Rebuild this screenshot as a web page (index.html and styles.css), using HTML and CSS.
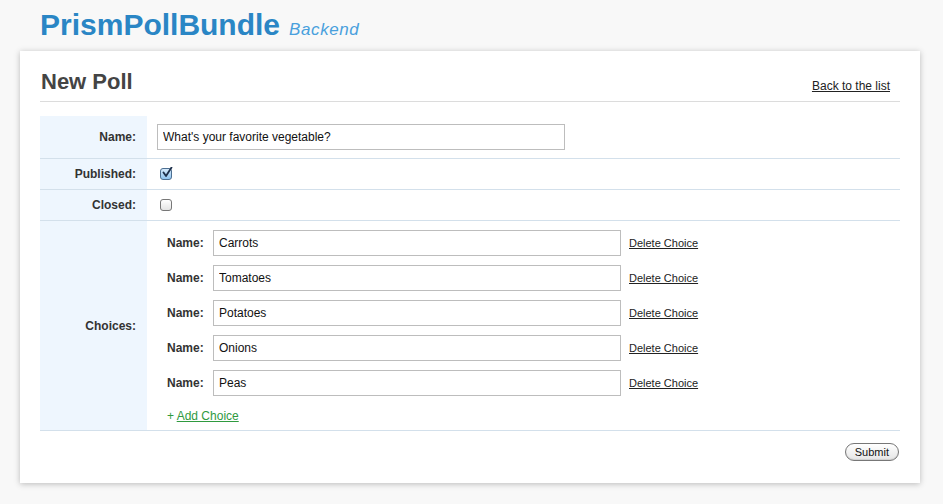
FILE: index.html
```html
<!DOCTYPE html>
<html>
<head>
<meta charset="utf-8">
<link rel="stylesheet" href="styles.css">
</head>
<body>
<header class="masthead">
  <h1 class="brand">PrismPollBundle</h1>
  <span class="brand-sub">Backend</span>
</header>
<main class="card">
  <div class="card-head">
    <h2 class="title">New Poll</h2>
    <a class="back" href="#">Back to the list</a>
  </div>
  <form class="form">
    <table class="grid">
      <tr class="row-name">
        <th>Name:</th>
        <td><input class="text wide" type="text" value="What's your favorite vegetable?"></td>
      </tr>
      <tr class="row-check">
        <th>Published:</th>
        <td><span class="cb checked"><svg viewBox="0 0 12 12" width="12" height="12"><path d="M2.5 5.5 L5 9 L10.5 0.5" fill="none" stroke="#1d2f4a" stroke-width="1.8" stroke-linecap="round" stroke-linejoin="round"/></svg></span></td>
      </tr>
      <tr class="row-check">
        <th>Closed:</th>
        <td><span class="cb"></span></td>
      </tr>
      <tr class="row-choices">
        <th>Choices:</th>
        <td>
          <div class="choices">
            <div class="choice"><span class="clabel">Name:</span><input class="text" type="text" value="Carrots"><a class="del" href="#">Delete Choice</a></div>
            <div class="choice"><span class="clabel">Name:</span><input class="text" type="text" value="Tomatoes"><a class="del" href="#">Delete Choice</a></div>
            <div class="choice"><span class="clabel">Name:</span><input class="text" type="text" value="Potatoes"><a class="del" href="#">Delete Choice</a></div>
            <div class="choice"><span class="clabel">Name:</span><input class="text" type="text" value="Onions"><a class="del" href="#">Delete Choice</a></div>
            <div class="choice"><span class="clabel">Name:</span><input class="text" type="text" value="Peas"><a class="del" href="#">Delete Choice</a></div>
            <div class="add">+ <a href="#">Add Choice</a></div>
          </div>
        </td>
      </tr>
    </table>
    <div class="actions"><button class="submit" type="button">Submit</button></div>
  </form>
</main>
</body>
</html>
```
FILE: styles.css
```css
html, body { margin: 0; padding: 0; }
body {
  background: #f8f8f8;
  font-family: "Liberation Sans", Arial, sans-serif;
  color: #333;
  width: 943px;
  height: 504px;
  overflow: hidden;
}
.masthead {
  display: flex;
  align-items: baseline;
  padding: 7px 0 0 40px;
  height: 44px;
  box-sizing: border-box;
}
.brand {
  margin: 0;
  font-size: 30px;
  font-weight: bold;
  color: #2a86c5;
  letter-spacing: 0;
  line-height: 36px;
}
.brand-sub {
  margin-left: 9px;
  font-size: 17px;
  font-style: italic;
  color: #49a0dd;
  letter-spacing: 0.6px;
}
.card {
  margin: 7px 0 0 20px;
  width: 900px;
  height: 432px;
  background: #fff;
  box-shadow: 0 1px 6px rgba(0,0,0,0.25);
  padding: 0 20px;
  box-sizing: border-box;
}
.card-head {
  display: flex;
  justify-content: space-between;
  align-items: flex-end;
  height: 51px;
  border-bottom: 1px solid #dcdcdc;
  padding-bottom: 6px;
  box-sizing: border-box;
}
.title {
  margin: 0 0 0 1px;
  font-size: 22px;
  font-weight: bold;
  color: #444;
  line-height: 26px;
}
.back {
  font-size: 12px;
  color: #222;
  margin-right: 10px;
  margin-bottom: 2px;
}
.form { padding-top: 14px; }
.grid {
  width: 860px;
  border-collapse: collapse;
}
.grid th {
  width: 107px;
  box-sizing: border-box;
  background: #eef6fe;
  text-align: right;
  padding: 0 11px 0 0;
  font-size: 12px;
  font-weight: bold;
  color: #333;
}
.grid td { padding: 0 0 0 10px; }
.grid tr + tr th, .grid tr + tr td { border-top: 1px solid #d3e0eb; }
.row-name th, .row-name td { height: 42px; }
.row-check th, .row-check td { height: 30px; }
.row-choices td { padding-top: 9px; padding-bottom: 0; }
.grid tr:last-child th, .grid tr:last-child td { border-bottom: 1px solid #d3e0eb; }
.text {
  box-sizing: border-box;
  height: 26px;
  border: 1px solid #bdbdbd;
  padding: 0 5px;
  font-family: "Liberation Sans", Arial, sans-serif;
  font-size: 12px;
  color: #111;
  background: #fff;
  margin: 0;
}
.wide { width: 408px; display: block; }
.cb {
  display: block;
  margin-left: 3px;
  width: 12px;
  height: 12px;
  box-sizing: border-box;
  border: 1px solid #777;
  border-radius: 3px;
  background: linear-gradient(#fff, #e4e4e4);
  position: relative;
}
.cb.checked {
  background: linear-gradient(#d7ebfc, #8fc3ef);
  border-color: #4d6f91;
}
.cb svg { position: absolute; left: 0; top: -2px; }
.choices {
  display: flex;
  flex-direction: column;
  gap: 9px;
  padding-left: 10px;
}
.choice {
  display: flex;
  align-items: center;
  height: 26px;
}
.clabel {
  width: 46px;
  font-size: 12px;
  font-weight: bold;
  color: #333;
}
.choice .text { width: 408px; }
.del {
  margin-left: 8px;
  font-size: 11px;
  color: #222;
}
.add {
  padding-top: 3px;
  height: 22px;
  font-size: 12px;
  color: #2f9a3f;
  line-height: 16px;
}
.add a { color: #2f9a3f; }
.actions {
  display: flex;
  justify-content: flex-end;
  padding: 12px 1px 0 0;
}
.submit {
  font-family: "Liberation Sans", Arial, sans-serif;
  font-size: 11px;
  color: #111;
  height: 18px;
  padding: 0 9px;
  border: 1px solid #777;
  border-radius: 9px;
  background: linear-gradient(#fff, #e6e6e6);
  box-shadow: inset 0 -1px 1px rgba(0,0,0,0.1);
}
```
